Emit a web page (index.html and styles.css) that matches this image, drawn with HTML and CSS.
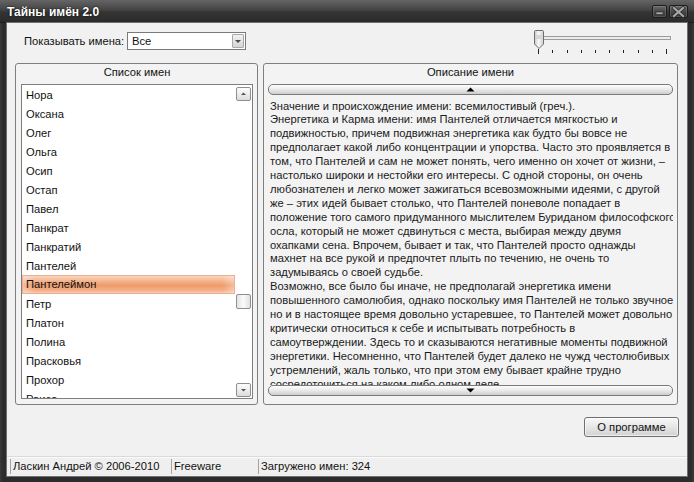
FILE: index.html
```html
<!DOCTYPE html>
<html lang="ru">
<head>
<meta charset="utf-8">
<title>Тайны имён 2.0</title>
<link rel="stylesheet" href="styles.css">
</head>
<body>
<div class="window">
  <div class="titlebar">
    <span class="title">Тайны имён 2.0</span>
    <div class="wbtns">
      <span class="wbtn wbtn-min">
        <svg width="15" height="13" viewBox="0 0 15 13"><rect x="4" y="7" width="7" height="2.5" fill="#a5a5a5" stroke="#2a2a2a" stroke-width="0.6"/></svg>
      </span>
      <span class="wbtn wbtn-close">
        <svg width="19" height="13" viewBox="0 0 19 13"><path d="M5 3 L14 11 M14 3 L5 11" stroke="#2a2a2a" stroke-width="3.6" stroke-linecap="square"/><path d="M5 3 L14 11 M14 3 L5 11" stroke="#a8a8a8" stroke-width="2.2" stroke-linecap="square"/></svg>
      </span>
    </div>
  </div>
  <div class="client">
    <div class="toolbar">
      <span class="show-label">Показывать имена:</span>
      <div class="combo">
        <span class="combo-value">Все</span>
        <span class="combo-btn">
          <svg width="10" height="12" viewBox="0 0 10 12"><path d="M2 5 L8 5 L5 8 Z" fill="#4a4a4a"/></svg>
        </span>
      </div>
      <svg class="slider" width="139" height="26" viewBox="0 0 139 26">
        <defs>
          <linearGradient id="th" x1="0" y1="0" x2="1" y2="0">
            <stop offset="0" stop-color="#c9c9c9"/>
            <stop offset="0.45" stop-color="#f7f7f7"/>
            <stop offset="1" stop-color="#cfcfcf"/>
          </linearGradient>
        </defs>
        <rect x="11.5" y="7.5" width="127" height="3" fill="#ececec" stroke="#9c9c9c"/>
        <path d="M2.5 2.5 Q2.5 1.5 3.5 1.5 L10.5 1.5 Q11.5 1.5 11.5 2.5 L11.5 15 L7 19.5 L2.5 15 Z" fill="url(#th)" stroke="#6e6e6e"/>
        <rect x="4" y="6" width="6" height="4" fill="#d6d6d6"/>
        <g stroke="#222" stroke-width="1">
          <line x1="6.5" y1="20" x2="6.5" y2="25"/>
          <line x1="20.5" y1="21" x2="20.5" y2="24"/>
          <line x1="35.5" y1="21" x2="35.5" y2="24"/>
          <line x1="49.5" y1="21" x2="49.5" y2="24"/>
          <line x1="63.5" y1="21" x2="63.5" y2="24"/>
          <line x1="77.5" y1="21" x2="77.5" y2="24"/>
          <line x1="91.5" y1="21" x2="91.5" y2="24"/>
          <line x1="106.5" y1="21" x2="106.5" y2="24"/>
          <line x1="120.5" y1="21" x2="120.5" y2="24"/>
          <line x1="134.5" y1="20" x2="134.5" y2="25"/>
        </g>
      </svg>
    </div>

    <div class="panels">
      <section class="group group-list">
        <div class="group-title">Список имен</div>
        <div class="listbox">
          <ul class="names">
            <li>Нора</li>
            <li>Оксана</li>
            <li>Олег</li>
            <li>Ольга</li>
            <li>Осип</li>
            <li>Остап</li>
            <li>Павел</li>
            <li>Панкрат</li>
            <li>Панкратий</li>
            <li>Пантелей</li>
            <li class="selected">Пантелеймон</li>
            <li>Петр</li>
            <li>Платон</li>
            <li>Полина</li>
            <li>Прасковья</li>
            <li>Прохор</li>
            <li>Раиса</li>
          </ul>
          <div class="vscroll">
            <span class="sbtn">
              <svg width="13" height="12" viewBox="0 0 13 12"><path d="M4 7 L9 7 L6.5 4.5 Z" fill="#555"/></svg>
            </span>
            <div class="strack"><span class="sthumb" style="margin-top:193px"></span></div>
            <span class="sbtn">
              <svg width="13" height="12" viewBox="0 0 13 12"><path d="M4 5 L9 5 L6.5 7.5 Z" fill="#555"/></svg>
            </span>
          </div>
        </div>
      </section>

      <section class="group group-desc">
        <div class="group-title">Описание имени</div>
        <div class="pill-btn">
          <svg width="9" height="5" viewBox="0 0 9 5"><path d="M0.5 4.5 L8.5 4.5 L4.5 0.5 Z" fill="#000"/></svg>
        </div>
        <div class="desc">Значение и происхождение имени: всемилостивый (греч.).<br>Энергетика и Карма имени: имя Пантелей отличается мягкостью и<br>подвижностью, причем подвижная энергетика как будто бы вовсе не<br>предполагает какой либо концентрации и упорства. Часто это проявляется в<br>том, что Пантелей и сам не может понять, чего именно он хочет от жизни, –<br>настолько широки и нестойки его интересы. С одной стороны, он очень<br>любознателен и легко может зажигаться всевозможными идеями, с другой<br>же – этих идей бывает столько, что Пантелей поневоле попадает в<br>положение того самого придуманного мыслителем Буриданом философского<br>осла, который не может сдвинуться с места, выбирая между двумя<br>охапками сена. Впрочем, бывает и так, что Пантелей просто однажды<br>махнет на все рукой и предпочтет плыть по течению, не очень то<br>задумываясь о своей судьбе.<br>Возможно, все было бы иначе, не предполагай энергетика имени<br>повышенного самолюбия, однако поскольку имя Пантелей не только звучное,<br>но и в настоящее время довольно устаревшее, то Пантелей может довольно<br>критически относиться к себе и испытывать потребность в<br>самоутверждении. Здесь то и сказываются негативные моменты подвижной<br>энергетики. Несомненно, что Пантелей будет далеко не чужд честолюбивых<br>устремлений, жаль только, что при этом ему бывает крайне трудно<br>сосредоточиться на каком либо одном деле.</div>
        <div class="pill-btn">
          <svg width="9" height="5" viewBox="0 0 9 5"><path d="M0.5 0.5 L8.5 0.5 L4.5 4.5 Z" fill="#000"/></svg>
        </div>
      </section>
    </div>

    <div class="actions">
      <button class="btn" type="button">О программе</button>
    </div>

    <div class="statusbar">
      <span class="status-cell cell-author">Ласкин Андрей © 2006-2010</span>
      <span class="status-cell cell-license">Freeware</span>
      <span class="status-cell cell-count">Загружено имен: 324</span>
    </div>
  </div>
</div>
</body>
</html>
```

FILE: styles.css
```css
* { box-sizing: border-box; }

html, body {
  margin: 0;
  padding: 0;
}

body {
  width: 694px;
  height: 482px;
  overflow: hidden;
  background: #262626;
  font-family: "Liberation Sans", Arial, sans-serif;
  font-size: 11.2px;
  color: #111;
}

.window {
  width: 694px;
  height: 482px;
  display: flex;
  flex-direction: column;
  padding: 0 7px 6px 7px;
  background: linear-gradient(to right, #3a3a3a, #2c2c2c 3px, #2c2c2c 691px, #3a3a3a);
}

.titlebar {
  height: 23px;
  flex: none;
  margin: 0 -7px;
  padding: 0 6px 0 7px;
  display: flex;
  align-items: center;
  background: linear-gradient(#656565, #444 45%, #343434 55%, #2b2b2b);
  border-bottom: 1px solid #1c1c1c;
}

.title {
  color: #fff;
  font-weight: bold;
  font-size: 12px;
  text-shadow: 0 0 2px #000;
  margin-top: 1px;
}

.wbtns {
  margin-left: auto;
  align-self: flex-start;
  margin-top: 5px;
  display: flex;
  gap: 2px;
}

.wbtn {
  display: block;
  height: 13px;
  border: 1px solid #1c1c1c;
  border-radius: 2px;
  background: linear-gradient(#6a6a6a, #474747 50%, #3a3a3a);
  box-shadow: inset 0 0 0 1px rgba(255,255,255,0.12);
  position: relative;
}

.wbtn svg {
  position: absolute;
  left: -1px;
  top: -1px;
}

.wbtn-min { width: 15px; }
.wbtn-close { width: 19px; }

.client {
  flex: 1;
  display: flex;
  flex-direction: column;
  background: #f1f1f1;
  box-shadow: 0 0 0 1px #707070;
}

/* toolbar */
.toolbar {
  height: 40px;
  flex: none;
  display: flex;
  align-items: flex-start;
  padding-left: 17px;
}

.show-label {
  width: 103px;
  margin-top: 9px;
  line-height: 19px;
  white-space: nowrap;
}

.combo {
  width: 119px;
  height: 18px;
  margin-top: 9px;
  border: 1px solid #7a7a7a;
  background: #fff;
  display: flex;
  align-items: center;
}

.combo-value {
  flex: 1;
  padding-left: 4px;
  line-height: 16px;
}

.combo-btn {
  width: 12px;
  height: 14px;
  margin-right: 1px;
  border: 1px solid #a9a9a9;
  border-radius: 1px;
  background: linear-gradient(#f2f2f2, #d4d4d4);
  display: flex;
  align-items: center;
  justify-content: center;
}

.slider {
  display: block;
  margin-left: auto;
  margin-right: 16px;
  margin-top: 6px;
}

/* panels */
.panels {
  height: 342px;
  flex: none;
  display: flex;
  gap: 5px;
  padding-left: 8px;
}

.group {
  height: 342px;
  border: 1px solid #7f7f7f;
  border-radius: 3px;
  display: flex;
  flex-direction: column;
  background: #f3f3f3;
}

.group-title {
  height: 20px;
  flex: none;
  line-height: 17px;
  text-align: center;
}

.group-list {
  width: 243px;
  padding: 0 4px 5px 5px;
}

.listbox {
  height: 315px;
  flex: none;
  border: 1px solid #7f7f7f;
  background: #fff;
  display: flex;
  overflow: hidden;
}

.names {
  flex: 1;
  list-style: none;
  margin: 0;
  padding: 1px 0 0;
  overflow: hidden;
}

.names li {
  height: 19px;
  line-height: 19px;
  padding-left: 4px;
  white-space: nowrap;
}

.names li.selected {
  height: 19px;
  margin-top: -1px;
  margin-bottom: 1px;
  background:
    linear-gradient(to right, rgba(255,255,255,0.35), rgba(255,255,255,0) 6%, rgba(255,255,255,0) 94%, rgba(255,255,255,0.35)),
    linear-gradient(#fbdccb, #f4b690 30%, #ef9b6a 55%, #f3ae86 80%, #f9d2bd);
  box-shadow: inset 0 0 0 1px #eab08f;
}

.vscroll {
  width: 17px;
  flex: none;
  display: flex;
  flex-direction: column;
  padding: 2px 0 1px 1px;
}

.sbtn {
  display: flex;
  width: 15px;
  height: 14px;
  flex: none;
  border: 1px solid #8e8e8e;
  border-radius: 2px;
  background: linear-gradient(#fdfdfd, #dcdcdc);
  align-items: center;
  justify-content: center;
}

.strack {
  flex: 1;
  display: flex;
  flex-direction: column;
}

.sthumb {
  display: block;
  width: 15px;
  height: 15px;
  border: 1px solid #8e8e8e;
  border-radius: 2px;
  background: linear-gradient(to right, #e4e4e4, #fafafa 50%, #e0e0e0);
}

.group-desc {
  width: 415px;
  padding: 0 4px 8px 4px;
}

.pill-btn {
  height: 11px;
  flex: none;
  border: 1px solid #7a7a7a;
  border-radius: 5px;
  background: linear-gradient(#fdfdfd, #ececec 45%, #cdcdcd);
  display: flex;
  align-items: center;
  justify-content: center;
}

.desc {
  height: 290px;
  flex: none;
  overflow: hidden;
  padding: 4.5px 0 0 2px;
  line-height: 13.9px;
  white-space: nowrap;
  color: #1a1a1a;
}

/* actions */
.actions {
  flex: none;
  display: flex;
  justify-content: flex-end;
  padding-right: 8px;
  margin-top: 12px;
}

.btn {
  width: 95px;
  height: 20px;
  padding: 0;
  border: 1px solid #6f6f6f;
  border-radius: 3px;
  background: linear-gradient(#f8f8f8, #e6e6e6 50%, #d2d2d2);
  box-shadow: inset 0 0 0 1px rgba(255,255,255,0.6);
  font-family: "Liberation Sans", Arial, sans-serif;
  font-size: 11.2px;
  color: #111;
}

/* status bar */
.statusbar {
  margin-top: auto;
  height: 20px;
  flex: none;
  display: flex;
  align-items: center;
  padding-left: 3px;
  border-top: 1px solid #dadada;
  box-shadow: inset 0 1px 0 #fbfbfb;
  background: #efefef;
}

.status-cell {
  height: 15px;
  line-height: 15px;
  padding-left: 2px;
  border-left: 1px solid #a3a3a3;
  white-space: nowrap;
}

.cell-author { width: 161px; }
.cell-license { width: 87px; }
.cell-count { flex: 1; }
```
